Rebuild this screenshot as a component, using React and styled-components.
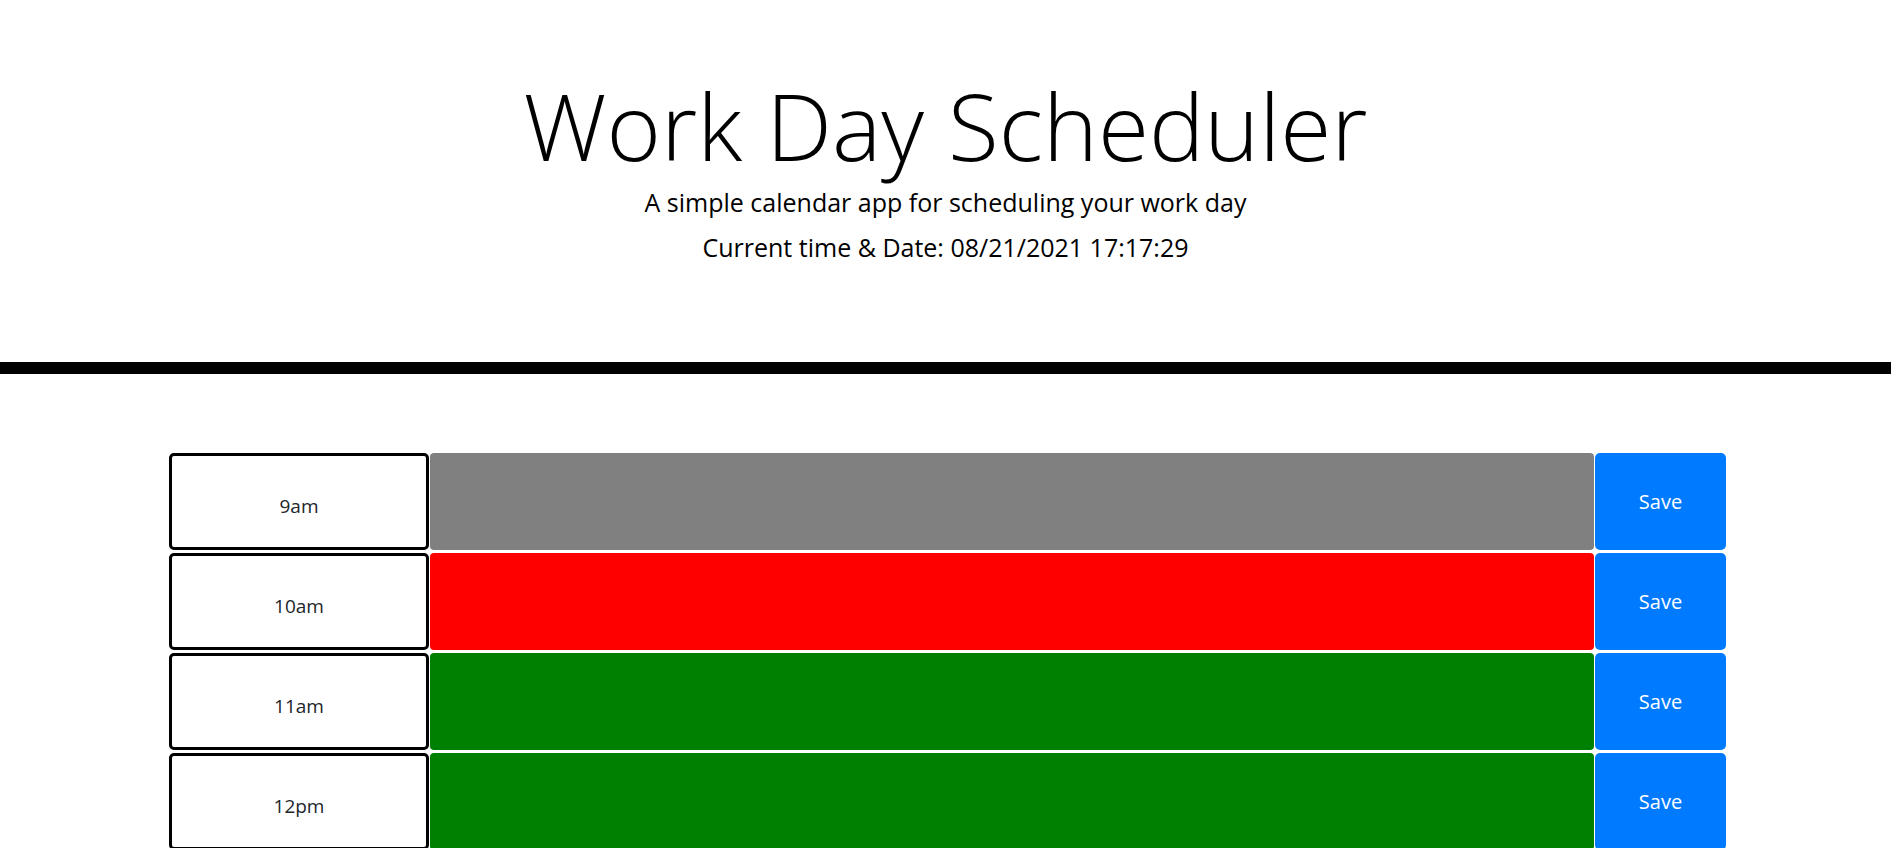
import styled, { createGlobalStyle } from "styled-components"

const GlobalStyle = createGlobalStyle`
    body {
        margin: 0;
        background: #ffffff;
        font-family: "Open Sans", "Noto Sans", sans-serif;
        color: #212529;
    }
`

const Header = styled.header`
    text-align: center;
    padding-top: 70px;
    /* thick black rule under the header */
    border-bottom: 12px solid #000000;
    height: 292px;
`
const Title = styled.h1`
    margin: 0 0 5px;
    font-size: 93px;
    font-weight: 350;
    line-height: 1.2;
    color: #000000;
`
const Lead = styled.p`
    margin: 0 0 ${props => props.$gap || 0}px;
    font-size: 25px;
    font-weight: 400;
    line-height: 30px;
    color: #000000;
`
const Planner = styled.main`
    padding: 79px 165px 40px 169px;
`
const Row = styled.div`
    display: grid;
    grid-template-columns: 260px 1fr 131px;
    column-gap: 1px;
    height: 97px;
    margin-bottom: 3px;
`
const Hour = styled.div`
    box-sizing: border-box;
    border: 3px solid #000000;
    border-radius: 5px;
    background: #ffffff;
    display: flex;
    justify-content: center;
    align-items: center;
    padding-top: 8px;
    font-size: 19px;
    color: #212529;
`
const Notes = styled.textarea`
    box-sizing: border-box;
    border: none;
    border-radius: 4px;
    resize: none;
    padding: 10px;
    font-family: inherit;
    font-size: 16px;
    color: #ffffff;
    background: ${props => props.$color};
    outline: none;
`
const SaveButton = styled.button`
    border: none;
    border-radius: 5px;
    background-color: #007bff;
    color: #ffffff;
    font-family: inherit;
    font-size: 20px;
    cursor: pointer;
`

const hours = [
    { label: "9am", color: "#808080" },
    { label: "10am", color: "#ff0000" },
    { label: "11am", color: "#008000" },
    { label: "12pm", color: "#008000" },
    { label: "1pm", color: "#008000" },
    { label: "2pm", color: "#008000" },
    { label: "3pm", color: "#008000" },
    { label: "4pm", color: "#008000" },
    { label: "5pm", color: "#008000" },
]

const App = () => {
  return (
    <>
        <GlobalStyle/>
        <Header>
            <Title>Work Day Scheduler</Title>
            <Lead $gap={15}>A simple calendar app for scheduling your work day</Lead>
            <Lead>Current time &amp; Date: 08/21/2021 17:17:29</Lead>
        </Header>
        <Planner>
            {hours.map(h => (
                <Row key={h.label}>
                    <Hour>{h.label}</Hour>
                    <Notes $color={h.color}/>
                    <SaveButton>Save</SaveButton>
                </Row>
            ))}
        </Planner>
    </>
  )
}

export default App
